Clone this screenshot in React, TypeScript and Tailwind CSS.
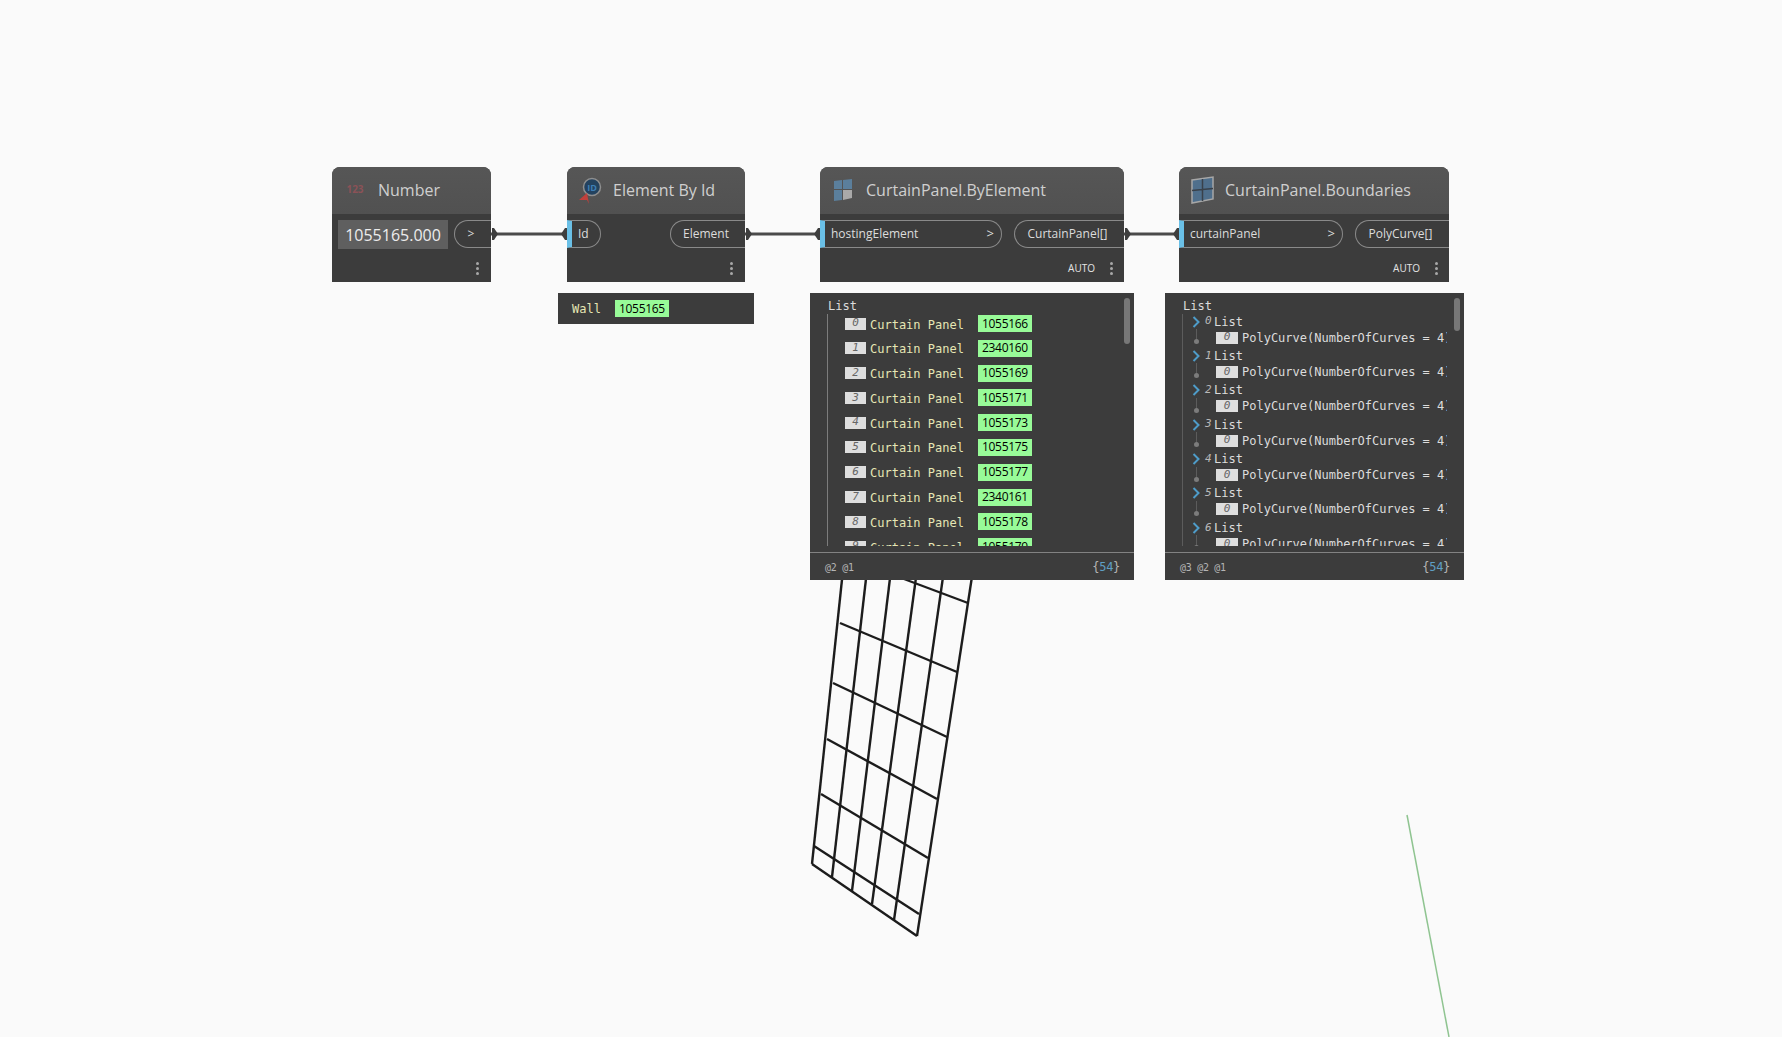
const uiFont = { fontFamily: '"Open Sans", "Noto Sans", sans-serif' };
const monoFont = { fontFamily: '"DejaVu Sans Mono", "Liberation Mono", monospace' };

const panelIds = [
  "1055166",
  "2340160",
  "1055169",
  "1055171",
  "1055173",
  "1055175",
  "1055177",
  "2340161",
  "1055178",
  "1055179",
];

const Chip = ({ value }: { value: string }) => (
  <span
    className="inline-flex h-[17px] items-center bg-[#98fb98] px-[4px] text-[12px] tracking-[-0.3px] text-black"
    style={uiFont}
  >
    {value}
  </span>
);

const MenuDots = () => (
  <div className="flex flex-col gap-[2px]">
    <span className="h-[3px] w-[3px] rounded-full bg-[#a8a8a8]" />
    <span className="h-[3px] w-[3px] rounded-full bg-[#a8a8a8]" />
    <span className="h-[3px] w-[3px] rounded-full bg-[#a8a8a8]" />
  </div>
);

const InputPort = ({ label, wide }: { label: string; wide?: string }) => (
  <div
    className={`flex h-[28px] items-center justify-between rounded-r-[14px] border-y border-r border-[#8a8a8a] border-l-[5px] border-l-[#6ac0e7] pl-[6px] pr-[7px] text-[12px] text-[#dcdcdc] ${wide}`}
  >
    <span>{label}</span>
    {wide !== "w-[34px]" && <span className="text-[13px]">&gt;</span>}
  </div>
);

const OutputPort = ({ label, width }: { label: string; width: string }) => (
  <div
    className={`flex h-[28px] items-center justify-center rounded-l-[14px] border-y border-l border-[#8a8a8a] pr-[4px] text-[12px] text-[#dcdcdc] ${width}`}
  >
    {label}
  </div>
);

const Header = ({ icon, title }: { icon: React.ReactNode; title: string }) => (
  <div className="flex h-[47px] items-center rounded-t-[8px] bg-gradient-to-b from-[#565656] to-[#515151] pb-[2px]">
    <div className="flex w-[46px] shrink-0 items-center justify-center">{icon}</div>
    <span className="text-[16px] whitespace-nowrap text-[#cfcfcf]">{title}</span>
  </div>
);

const NodeFooter = ({ auto }: { auto?: boolean }) => (
  <div className={`flex h-[28px] items-center justify-end gap-[15px] ${auto ? "pr-[11px]" : "pr-[12px]"}`}>
    {auto && <span className="text-[10px] text-[#e4e4e4]">AUTO</span>}
    <MenuDots />
  </div>
);

const PanelIcon = () => (
  <svg width="24" height="24" viewBox="0 0 24 24">
    <path d="M3 3 L11 2 L11 11 L3 11 Z" fill="#5b7f9c" />
    <path d="M12 2 L21 1 L21 11 L12 11 Z" fill="#5b7f9c" />
    <path d="M3 12 L11 12 L11 22 L3 23 Z" fill="#5b7f9c" />
    <path d="M12 12 L21 12 L21 20 L12 22 Z" fill="#a9a9a9" />
  </svg>
);

const BoundaryIcon = () => (
  <svg width="24" height="28" viewBox="0 0 24 28">
    <path d="M2 4 L23 1 L23 23 L2 27 Z" fill="#4f6f8c" stroke="#a7a7a7" strokeWidth="1.5" />
    <path d="M12.5 3 L12.5 25 M2 14.5 L23 12.5" stroke="#39414a" strokeWidth="1.5" />
  </svg>
);

const IdIcon = () => (
  <svg width="30" height="32" viewBox="0 0 30 32">
    <circle cx="17" cy="13" r="8.5" fill="#23425f" stroke="#8f8f8f" strokeWidth="1.5" />
    <text x="17" y="16.5" textAnchor="middle" fontSize="9" fontWeight="700" fill="#3f7fb5" style={uiFont}>
      ID
    </text>
    <path d="M12 19 L4 26 L12 26 L14 30 Z" fill="#c0403c" />
  </svg>
);

const NumberIcon = () => (
  <span className="text-[10px] font-bold text-[#8b5257]" style={uiFont}>
    123
  </span>
);

const Preview = ({
  className,
  children,
  footer,
}: {
  className: string;
  children: React.ReactNode;
  footer: string;
}) => (
  <div className={`absolute top-[293px] flex h-[287px] flex-col bg-[#3c3c3c] ${className}`} style={monoFont}>
    <div className="relative flex-1 overflow-hidden">{children}</div>
    <div className="flex h-[28px] items-center justify-between border-t border-[#828282] pt-[1px] pl-[15px] pr-[14px] text-[10px] tracking-[-0.3px] text-[#b4b4b4]">
      <span>{footer}</span>
      <span className="text-[12px]">
        {"{"}
        <span className="text-[#5f9fc4]">54</span>
        {"}"}
      </span>
    </div>
  </div>
);

const IndexBox = ({ n, width }: { n: number; width: string }) => (
  <span
    className={`flex h-[12px] items-center justify-center bg-[#dedede] text-[11px] italic text-[#666666] ${width}`}
  >
    {n}
  </span>
);

const CanvasDrawing = () => (
  <svg className="absolute top-0 left-0" width="1782" height="1037" viewBox="0 0 1782 1037">
    <g stroke="#1c1c1c" strokeWidth="2.4" fill="none">
      <path d="M812 864 L843 570" />
      <path d="M917 936 L973 570" />
      <path d="M812 864 L917 936" />
      <path d="M832 877 L867 570" />
      <path d="M852 891 L891 570" />
      <path d="M872 904 L917 570" />
      <path d="M894 920 L944 570" />
      <path d="M814 846 L919 914" />
      <path d="M821 794 L928 858" />
      <path d="M827 739 L937 799" />
      <path d="M833 683 L947 737" />
      <path d="M840 623 L957 672" />
      <path d="M880 570 L968 603" />
    </g>
    <path d="M1407 815 L1449 1037" stroke="#8fc490" strokeWidth="1.5" />
    <g stroke="#4a4a4a" strokeWidth="3">
      <path d="M491 234 L567 234" />
      <path d="M745 234 L820 234" />
      <path d="M1124 234 L1179 234" />
    </g>
    <g fill="#3e3e3e">
      <path d="M492 228 L494 228 L498 234 L494 240 L492 240 Z" />
      <path d="M567 228 L565 228 L561 234 L565 240 L567 240 Z" />
      <path d="M746 228 L748 228 L752 234 L748 240 L746 240 Z" />
      <path d="M820 228 L818 228 L814 234 L818 240 L820 240 Z" />
      <path d="M1125 228 L1127 228 L1131 234 L1127 240 L1125 240 Z" />
      <path d="M1179 228 L1177 228 L1173 234 L1177 240 L1179 240 Z" />
    </g>
  </svg>
);

const PanelList = () => (
  <>
    <div className="absolute top-[7px] left-[18px] text-[12px] leading-[12px] text-[#dcdcdc]">List</div>
    <div className="absolute top-[21px] bottom-[6px] left-[17px] w-[1px] bg-[#7c7c7c]" />
    <div className="absolute top-[5px] right-[4px] h-[46px] w-[6px] rounded-full bg-[#777777]" />
    <div className="flex flex-col gap-[7.8px] pt-[22px] pl-[35px]">
      {panelIds.map((id, i) => (
        <div key={id} className="flex h-[17px] items-center">
          <IndexBox n={i} width="w-[21px]" />
          <span className="mt-[2px] ml-[4px] w-[108px] text-[12px] text-[#e6e6b4]">Curtain Panel</span>
          <Chip value={id} />
        </div>
      ))}
    </div>
    <div className="absolute right-0 bottom-0 left-0 h-[6px] bg-[#3c3c3c]" />
  </>
);

const CurveList = () => (
  <>
    <div className="absolute top-[7px] left-[18px] text-[12px] leading-[12px] text-[#dcdcdc]">List</div>
    <div className="absolute top-[21px] bottom-[6px] left-[17px] w-[1px] bg-[#5c5c5c]" />
    <div className="absolute top-[5px] right-[4px] h-[33px] w-[6px] rounded-full bg-[#777777]" />
    <div className="flex flex-col gap-[1.4px] pt-[20px] pl-[27px]">
      {[0, 1, 2, 3, 4, 5, 6].map((n) => (
        <div key={n} className="flex h-[33px] flex-col">
          <div className="flex h-[16px] items-center pt-[1px]">
            <svg width="8" height="12" viewBox="0 0 8 12" className="shrink-0">
              <path d="M1.5 1 L6.5 6 L1.5 11" fill="none" stroke="#4e9cc9" strokeWidth="2" />
            </svg>
            <span className="ml-[5px] w-[9px] text-[11px] italic text-[#b8b8b8]">{n}</span>
            <span className="text-[12px] text-[#dcdcdc]">List</span>
          </div>
          <div className="relative flex h-[17px] w-[255px] items-center overflow-hidden pl-[24px] whitespace-nowrap">
            <span className="absolute top-0 left-[4px] h-[10px] w-[1px] bg-[#5c5c5c]" />
            <span className="absolute top-[10px] left-[2px] h-[5px] w-[5px] rounded-full bg-[#7c7c7c]" />
            <IndexBox n={0} width="w-[22px] shrink-0" />
            <span className="ml-[4px] text-[12px] text-[#dcdcdc]">PolyCurve(NumberOfCurves = 4)</span>
          </div>
        </div>
      ))}
    </div>
    <div className="absolute right-0 bottom-0 left-0 h-[6px] bg-[#3c3c3c]" />
  </>
);

export default function App() {
  return (
    <div className="relative h-[1037px] w-full overflow-hidden bg-[#fafafa]" style={uiFont}>
      <CanvasDrawing />

      <div className="absolute top-[167px] left-[332px] w-[159px] rounded-t-[8px] bg-[#3c3c3c]">
        <Header icon={<NumberIcon />} title="Number" />
        <div className="flex h-[40px] items-start gap-[6px] pt-[6px] pl-[6px]">
          <div className="flex h-[29px] w-[110px] items-center justify-center bg-[#5f5f5f] text-[16px] text-[#ececec]">
            1055165.000
          </div>
          <div className="flex h-[28px] flex-1 items-center justify-center rounded-l-[14px] border-y border-l border-[#8a8a8a] pr-[4px] text-[12px] text-[#dcdcdc]">
            &gt;
          </div>
        </div>
        <NodeFooter />
      </div>

      <div className="absolute top-[167px] left-[567px] w-[178px] rounded-t-[8px] bg-[#3c3c3c]">
        <Header icon={<IdIcon />} title="Element By Id" />
        <div className="flex h-[40px] items-start justify-between pt-[6px]">
          <InputPort label="Id" wide="w-[34px]" />
          <OutputPort label="Element" width="w-[75px]" />
        </div>
        <NodeFooter />
      </div>
      <div
        className="absolute top-[293px] left-[558px] flex h-[31px] w-[196px] items-center bg-[#3c3c3c] pl-[14px]"
        style={monoFont}
      >
        <span className="w-[43px] text-[12px] text-[#e6e6b4]">Wall</span>
        <Chip value="1055165" />
      </div>

      <div className="absolute top-[167px] left-[820px] w-[304px] rounded-t-[8px] bg-[#3c3c3c]">
        <Header icon={<PanelIcon />} title="CurtainPanel.ByElement" />
        <div className="flex h-[40px] items-start justify-between pt-[6px]">
          <InputPort label="hostingElement" wide="w-[182px]" />
          <OutputPort label="CurtainPanel[]" width="w-[110px]" />
        </div>
        <NodeFooter auto />
      </div>
      <Preview className="left-[810px] w-[324px]" footer="@2 @1">
        <PanelList />
      </Preview>

      <div className="absolute top-[167px] left-[1179px] w-[270px] rounded-t-[8px] bg-[#3c3c3c]">
        <Header icon={<BoundaryIcon />} title="CurtainPanel.Boundaries" />
        <div className="flex h-[40px] items-start justify-between pt-[6px]">
          <InputPort label="curtainPanel" wide="w-[164px]" />
          <OutputPort label="PolyCurve[]" width="w-[94px]" />
        </div>
        <NodeFooter auto />
      </div>
      <Preview className="left-[1165px] w-[299px]" footer="@3 @2 @1">
        <CurveList />
      </Preview>
    </div>
  );
}
